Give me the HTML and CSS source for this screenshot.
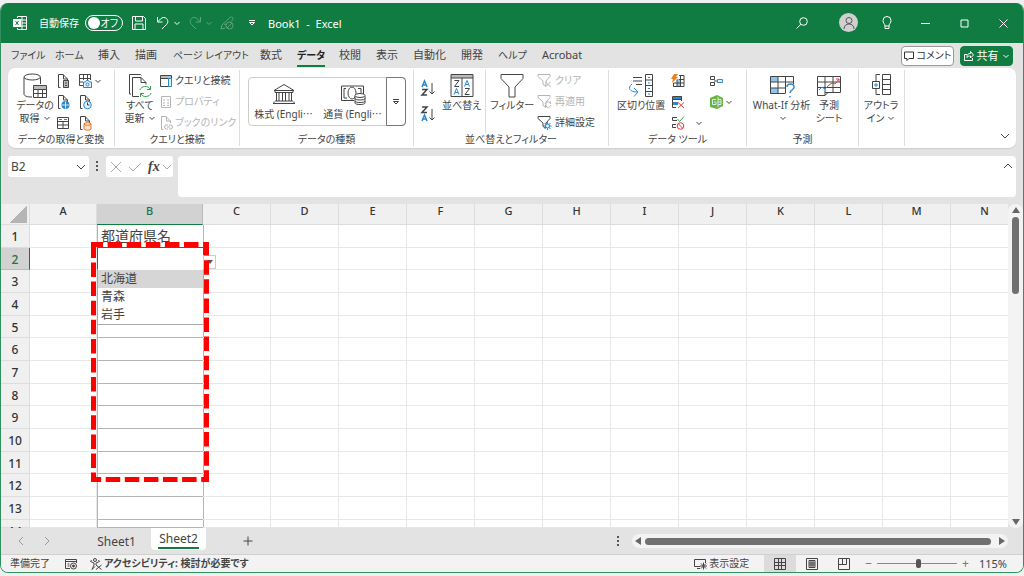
FILE: index.html
```html
<!DOCTYPE html>
<html lang="ja">

<head>
    <meta charset="UTF-8">
    <title>Book1 - Excel</title>
    <link rel="stylesheet" href="styles.css">
</head>

<body>
<svg class="defs" aria-hidden="true">
    <symbol id="down" viewBox="0 0 8 8"><path d="M1.500 3 4 5.500 6.500 3"/></symbol>
    <symbol id="page" viewBox="0 0 14 16"><path d="M4.500 14.500H2.500V1.500H7L11.500 6M7.500 1.500V6h4v2"/></symbol>
    <symbol id="funnel" viewBox="0 0 16 16"><path d="M1 1.500h12v2L9 8v5l-3-1.500V8L1 3.500z"/></symbol>
</svg>
<div class="window">
    <header class="title-bar">
        <svg class="logo" width="14" height="14" viewBox="0 0 14 14"><path d="M4.500 2V.5h9v13h-9V12M9 .5v13M4.500 4h9M9 7h4.500M9 10h4.500M4.500 10H9"/><path class="solid" d="M0 3h8v8H0z"/><path class="cut" d="m2.500 5 3 4m0-4-3 4"/></svg>
        <label class="autosave">自動保存
            <input type="checkbox" role="switch">
            <span class="switch"><i></i>オフ</span>
        </label>
        <button class="save" aria-label="保存"><svg width="14" height="14" viewBox="0 0 14 14"><path d="M.5.5h11l2 2v11H.5zM3.500.5v4.500h7V.5M3 13.500V8h8v5.500"/></svg></button>
        <button class="undo" aria-label="元に戻す"><svg width="14" height="14" viewBox="0 0 14 14"><path d="M1.500 1v5h5M1.500 6l3-3c2-2 4.500-2 6-.5s2 4 0 6L6 13"/></svg><svg width="8" height="8"><use href="#down"/></svg></button>
        <button class="redo faded" aria-label="やり直し"><svg width="14" height="14" viewBox="0 0 14 14"><path d="M12.500 1v5h-5M12.500 6l-3-3C7.500 1 5 1 3.500 2.500s-2 4 0 6L8 13"/></svg><svg width="8" height="8"><use href="#down"/></svg></button>
        <button class="pen faded" aria-label="ペン"><svg width="14" height="14" viewBox="0 0 14 14"><path d="m5 12-4 1 1-4 8-7.500c2-1.500 4 .5 2.500 2.500L11 5.500"/><circle cx="9.500" cy="9.500" r="3.500"/><path d="m7 12 5-5M4 8l2 1"/></svg></button>
        <button class="more" aria-label="カスタマイズ"><svg width="8" height="8" viewBox="0 0 8 8"><path d="M1 1.500h6M1.500 3.500h5L4 6z"/></svg></button>
        <span class="book">Book1&nbsp; -&nbsp; Excel</span>
        <div class="window-tools">
            <button aria-label="検索"><svg width="12" height="12" viewBox="0 0 12 12"><circle cx="7.500" cy="4.500" r="3.800"/><path d="M4.800 7.500.5 11.500"/></svg></button>
            <button class="user" aria-label="アカウント"><svg width="14" height="14" viewBox="0 0 14 14"><circle cx="7" cy="4.500" r="3"/><path d="M2 13c0-3 2-5 5-5s5 2 5 5"/></svg></button>
            <button aria-label="ヒント"><svg width="10" height="14" viewBox="0 0 10 14"><path d="M3 10c0-2-2-3-2-5.500a4 4 0 0 1 8 0C9 7 7 8 7 10zM3 10v2.500h4V10"/></svg></button>
            <button aria-label="最小化"><svg width="9" height="9" viewBox="0 0 9 9"><path d="M0 4.500h9"/></svg></button>
            <button aria-label="最大化"><svg width="9" height="9" viewBox="0 0 9 9"><path d="M1 1h7v7H1z"/></svg></button>
            <button aria-label="閉じる"><svg width="9" height="9" viewBox="0 0 9 9"><path d="m.5.5 8 8m0-8-8 8"/></svg></button>
        </div>
    </header>

    <div class="tab-bar">
        <nav class="tabs">
            <a href="#" class="kana">ファイル</a>
            <a href="#" class="kana">ホーム</a>
            <a href="#">挿入</a>
            <a href="#">描画</a>
            <a href="#" class="kana">ページ レイアウト</a>
            <a href="#">数式</a>
            <a href="#" class="kana current">データ</a>
            <a href="#">校閲</a>
            <a href="#">表示</a>
            <a href="#">自動化</a>
            <a href="#">開発</a>
            <a href="#" class="kana">ヘルプ</a>
            <a href="#">Acrobat</a>
        </nav>
        <button class="comment"><svg width="10" height="10" viewBox="0 0 10 10"><path d="M.5 1h9v6.500H5l-2 2v-2H.5z"/></svg>コメント</button>
        <button class="share"><svg width="10" height="10" viewBox="0 0 10 10"><path d="M3 3.500H.5v6h8V7M3 6.500c0-3 1-4 3.500-4V.5L9.500 4l-3 3V5C5 5 4 5 3 6.500"/></svg>共有<svg width="8" height="8"><use href="#down"/></svg></button>
    </div>

    <div class="ribbon">
        <section class="group get-data">
            <div class="tools">
                <button class="big">
                    <svg width="26" height="26" viewBox="0 0 26 26"><path d="M10 24c-5 0-8-1-8-3V4.500M18.500 4.500V11"/><ellipse cx="10.200" cy="4" rx="8.200" ry="3"/><path d="M11.500 12.500h13v12h-13zM11.500 16.500h13m-13 4h13M16 12.500v12m4.500-12v12"/><path class="shade" d="M12 13h12v3H12z"/></svg>
                    <span>データの<br>取得<svg width="8" height="8"><use href="#down"/></svg></span>
                </button>
                <div class="small">
                    <button aria-label="テキストから"><svg width="14" height="16"><use href="#page"/><path class="shade" d="M7 7.500h6v7H7z"/><path d="M7.500 7.500h5v7h-5zM9 10h2m-2 2.500h2"/></svg></button>
                    <button aria-label="Webから"><svg width="14" height="16"><use href="#page"/><circle class="blue-fill" cx="9.500" cy="11" r="4"/><path class="pale" d="M6 11h7M9.500 7.500v7"/></svg></button>
                    <button aria-label="テーブルから"><svg width="14" height="14" viewBox="0 0 14 14"><path d="M1.500 1.500h11v11h-11zM1.500 5.500h11M1.500 9h11M7 5.500v7"/><path class="blue" d="M3 3.500h3m2 0h3"/></svg></button>
                </div>
                <div class="small">
                    <button aria-label="画像から"><svg width="14" height="16" viewBox="0 0 14 16"><path d="M5 12.500H1.500v-11h11V7M1.500 5.500h11M1.500 9H5M5.500 2v5m4-5v5"/><path class="blue light" d="M5.500 9h2l1-1.500h2L11.500 9h2v5.500h-8z"/><circle class="blue" cx="9.500" cy="11.500" r="1.500"/></svg><svg width="8" height="8"><use href="#down"/></svg></button>
                    <button aria-label="最近のソース"><svg width="14" height="16"><use href="#page"/><circle class="blue light" cx="9.500" cy="11" r="3.800"/><path d="M9.500 8.500V11h2"/></svg></button>
                    <button aria-label="既存の接続"><svg width="14" height="16"><use href="#page"/><path class="orange" d="M6 9v5c0 1.500 7 1.500 7 0V9"/><ellipse class="orange" cx="9.500" cy="9" rx="3.500" ry="1.300"/></svg></button>
                </div>
            </div>
            <h2>データの取得と変換</h2>
        </section>

        <section class="group queries">
            <div class="tools">
                <button class="big">
                    <svg width="26" height="26" viewBox="0 0 26 26"><path d="M4 21H2.500V1.500h11l1 1"/><path d="M12 23.500H5.500v-19H14l5 5v2M14 4.500v5h5"/><path class="green" d="M13 17c1-4 8-5 10-1m.5-3v3.500H20M24 20c-1 4-8 5-10 1m-.5 3v-3.500H17"/></svg>
                    <span>すべて<br>更新<svg width="8" height="8"><use href="#down"/></svg></span>
                </button>
                <div class="small">
                    <button><svg width="14" height="14" viewBox="0 0 14 14"><path class="shade" d="M1 2h12v2H1z"/><path d="M1.500 1.500h11v11h-11zM1.500 4.500h11"/><path class="blue light" d="M9.500 4.500h3v8h-3z"/></svg>クエリと接続</button>
                    <button disabled><svg width="14" height="14" viewBox="0 0 14 14"><path d="M2.500 1.500h9v11h-9zM4 5h2m2 0h2M4 8h2m2 0h2M4 10.500h2m2 0h2"/></svg>プロパティ</button>
                    <button disabled><svg width="14" height="16"><use href="#page"/><path d="M9 10H7.500a2 2 0 0 0 0 4H9m1-4h1.500a2 2 0 0 1 0 4H10m-2-2h3"/></svg>ブックのリンク</button>
                </div>
            </div>
            <h2>クエリと接続</h2>
        </section>

        <section class="group data-types">
            <div class="tools">
                <div class="gallery">
                    <button><svg width="24" height="22" viewBox="0 0 24 22"><path d="M2 7.500 12 1.500l10 6zM3 7.500v2h18v-2M4.500 9.500V18M7 9.500V18m3.500-8.500V18m3-8.500V18M17 9.500V18m2.500-8.500V18M3 18h18M1 20.500h22M2 18.500v2m20-2v2"/></svg><span>株式 (Engli<b>…</b></span></button>
                    <button><svg width="26" height="22" viewBox="0 0 26 22"><path d="M14 17.500H1.500V3h22v8M4 5.500h2M4 5.500V15h3M21 10V5.500h-3"/><ellipse cx="12" cy="10" rx="4" ry="6"/><path class="paper" d="M15 13v7c0 2 10 2 10 0v-7"/><ellipse class="paper" cx="20" cy="12.500" rx="5" ry="2"/><path d="M15 15.500c0 2 10 2 10 0M15 18c0 2 10 2 10 0"/></svg><span>通貨 (Engli<b>…</b></span></button>
                    <button class="expand" aria-label="データの種類"><svg width="8" height="8" viewBox="0 0 8 8"><path d="M1 1.500h6M1.500 3.500h5L4 6z"/></svg></button>
                </div>
            </div>
            <h2>データの種類</h2>
        </section>

        <section class="group sort-filter">
            <div class="tools">
                <div class="small sorts">
                    <button aria-label="昇順"><svg width="16" height="18" viewBox="0 0 16 18"><path class="blue" d="m2 8 2.500-6L7 8M3 6h3"/><path class="strong" d="M2 10.500h5L2 16h5"/><path d="M12 4v11m-2.500-2.500L12 15l2.500-2.500"/></svg></button>
                    <button aria-label="降順"><svg width="16" height="18" viewBox="0 0 16 18"><path class="strong" d="M2 2h5L2 7.500h5"/><path class="blue" d="m2 16 2.500-6L7 16m-4-2h3"/><path d="M12 4v11m-2.500-2.500L12 15l2.500-2.500"/></svg></button>
                </div>
                <button class="big">
                    <svg width="26" height="26" viewBox="0 0 26 26"><path class="shade" d="M2 2h22v3H2z"/><path d="M2 1.500h22v22H2zM2 5h22M13 5v18.500M5.500 7.500H10l-4.500 6H10M16 15.500h4.500l-4.500 6h4.500"/><path class="blue" d="m5 21.500 2.500-6 2.500 6m-4-2h3M15.500 13.500l2.500-6 2.500 6m-4-2h3"/></svg>
                    <span>並べ替え</span>
                </button>
                <button class="big filter">
                    <svg width="26" height="26" viewBox="0 0 26 26"><path d="M2 1.500h22v4L16 14v10h-6V14L2 5.500z"/></svg>
                    <span>フィルター</span>
                </button>
                <div class="small">
                    <button disabled><svg width="16" height="16"><use href="#funnel"/><path d="m8.500 9 5 5m0-5-5 5"/></svg>クリア</button>
                    <button disabled><svg width="16" height="16"><use href="#funnel"/><path d="M8 10c1-3 5-3 5.500 0V7.500M14 11c-1 3-5 3-5.500 0v3"/></svg>再適用</button>
                    <button><svg width="16" height="16"><use href="#funnel"/><path class="blue" d="M10.500 7v8m-4-4h8m-7-3 6 6m0-6-6 6"/><circle class="blue light" cx="10.500" cy="11" r="2"/></svg>詳細設定</button>
                </div>
            </div>
            <h2>並べ替えとフィルター</h2>
        </section>

        <section class="group data-tools">
            <div class="tools">
                <button class="big">
                    <svg width="26" height="26" viewBox="0 0 26 26"><path d="M5 4.500h9M5 8h9M8 11.500h6M17.500 1.500h7v22h-7zM17.500 7h7m-7 5.500h7m-7 6h7"/><path class="blue" d="M4 11c-5 4-2 8 5 8m-3-4 4 4-4 4.500M20 4.500h2m-2 5.500h2m-2 5.500h2m-2 5.500h2"/></svg>
                    <span>区切り位置</span>
                </button>
                <div class="small">
                    <button aria-label="フラッシュ フィル"><svg width="14" height="14" viewBox="0 0 14 14"><path class="sky" d="M6 5h4v8H6z"/><path d="M8 1.500h5v11H2.500V9M2.500 9H13M8 5.500h5M9.500 2v11M6 5.500v7"/><path class="bolt" d="M3 0h4L5 3h2L1 9l1-4H0z"/></svg></button>
                    <button aria-label="重複の削除"><svg width="14" height="14" viewBox="0 0 14 14"><path class="blue-fill" d="M2 1h9v3H2zM2 7h5v3H2z"/><path d="M1.500 1.500h9V6M1.500 1.500v11H5M2 4.500h9"/><path class="red" d="m7 7.500 6 5.500m0-5.500L7 13"/></svg></button>
                    <button aria-label="データの入力規則"><svg width="14" height="14" viewBox="0 0 14 14"><path d="M6 1.500H1.500v3H6M5 8.500H1.500v3H5"/><path class="green" d="m6.500 3 2 2.500L13 .5"/><circle class="red" cx="9.500" cy="10" r="3.300"/><path class="red" d="m7.500 8 4 4"/></svg></button>
                </div>
                <div class="small arrows">
                    <button aria-label="入力規則のメニュー"><svg width="8" height="8"><use href="#down"/></svg></button>
                </div>
                <div class="small">
                    <button aria-label="統合"><svg width="14" height="14" viewBox="0 0 14 14"><path d="M1.500 2.500h4v3h-4zM1.500 8.500h4v3h-4zM5 7h3"/><path class="blue light" d="M8.500 5.500h5v3h-5z"/></svg></button>
                    <button aria-label="データ モデル"><svg width="14" height="14" viewBox="0 0 14 14"><path class="lime" d="m1 3 7-3 6 3v8l-6 3-7-2z"/><path class="pale" d="M7 4.500H3.500v5H7V7H5M9 2v10m0-7.500h3v5H9M9 7h3"/></svg><svg width="8" height="8"><use href="#down"/></svg></button>
                </div>
            </div>
            <h2>データ ツール</h2>
        </section>

        <section class="group forecast">
            <div class="tools">
                <button class="big">
                    <svg width="26" height="26" viewBox="0 0 26 26"><path class="sky" d="M1 3h8v6H1zM1 15h8v6H1z"/><path d="M24.500 11V3.500h-23v17H16M1.500 9h23M1.500 15H17M9 3.500v17m7.500-17v17"/><path class="blue ask" d="M18 14c0-4 7-4 7 0 0 3-4 3-4 6m0 3v1.500"/></svg>
                    <span>What-If 分析<br><svg width="8" height="8"><use href="#down"/></svg></span>
                </button>
                <button class="big">
                    <svg width="26" height="26" viewBox="0 0 26 26"><path d="M1.500 3.500h23v16H12l-3 3H1.500zM1.500 9h23M1.500 14.500h23M9 3.500v19m8-19v16M9 19.500h3"/><path class="blue" d="m3 17 3-3 3 2 4-4"/><path class="red" d="m13 12 3-2 3 1 4-5m-3 0h3v3"/></svg>
                    <span>予測<br>シート</span>
                </button>
            </div>
            <h2>予測</h2>
        </section>

        <section class="group outline">
            <div class="tools">
                <button class="big">
                    <svg width="26" height="26" viewBox="0 0 26 26"><path d="M14.500 1.500h8v20h-8zM14.500 6.500h8m-8 5h8m-8 5h8M4.500 8.500h7v7h-7zM12 1.500H8v7M8 15.500v6h4"/><path class="blue" d="M6 12h4m-2-2v4"/></svg>
                    <span>アウトラ<br>イン<svg width="8" height="8"><use href="#down"/></svg></span>
                </button>
            </div>
        </section>
        <button class="collapse" aria-label="リボンを折りたたむ"><svg width="10" height="8" viewBox="0 0 10 8"><path d="m1 2 4 4 4-4"/></svg></button>
    </div>

    <div class="formula-bar">
        <div class="name-box">
            <input type="text" value="B2" aria-label="名前ボックス">
            <button aria-label="名前の一覧"><svg width="10" height="8" viewBox="0 0 10 8"><path d="m1 2 4 4 4-4"/></svg></button>
        </div>
        <svg class="dots" width="4" height="12" viewBox="0 0 4 12"><path d="M1 1h2v2H1zM1 5h2v2H1zM1 9h2v2H1z"/></svg>
        <div class="formula-buttons">
            <button class="dim" aria-label="キャンセル"><svg width="12" height="12" viewBox="0 0 12 12"><path d="m1 1 10 10m0-10L1 11"/></svg></button>
            <button class="dim" aria-label="入力"><svg width="14" height="12" viewBox="0 0 14 12"><path d="m1 6 4 4 8-8"/></svg></button>
            <button class="fx">fx</button>
            <button class="dim" aria-label="関数の一覧"><svg width="10" height="8" viewBox="0 0 10 8"><path d="m1 2 4 4 4-4"/></svg></button>
        </div>
        <div class="formula">
            <textarea aria-label="数式バー"></textarea>
            <button aria-label="数式バーの折りたたみ"><svg width="10" height="8" viewBox="0 0 10 8"><path d="m1 6 4-4 4 4"/></svg></button>
        </div>
    </div>

    <main class="sheet-area">
        <table class="sheet">
            <thead>
                <tr><th class="corner"></th><th>A</th><th class="active">B</th><th>C</th><th>D</th><th>E</th><th>F</th><th>G</th><th>H</th><th>I</th><th>J</th><th>K</th><th>L</th><th>M</th><th>N</th></tr>
            </thead>
            <tbody>
                <tr>
                    <th>1</th><td></td>
                    <td class="list">都道府県名</td>
                </tr>
                <tr>
                    <th class="active">2</th><td></td>
                    <td class="list selected">
                        <button class="open-list" aria-label="リストを開く"><svg width="6" height="4" viewBox="0 0 6 4"><path d="M0 0h6L3 4z"/></svg></button>
                        <ul class="choices" role="listbox" aria-label="都道府県名">
                            <li role="option" aria-selected="true">北海道</li>
                            <li role="option">青森</li>
                            <li role="option">岩手</li>
                        </ul>
                        <svg class="marker" width="118" height="240" viewBox="0 0 118 240"><path d="M2.500 2.500h113v235H2.500z"/></svg>
                    </td>
                </tr>
            </tbody>
        </table>
        <div class="v-scroll">
            <svg width="8" height="6" viewBox="0 0 8 6"><path d="M0 6 4 0l4 6z"/></svg>
            <div class="track"><i></i></div>
            <svg width="8" height="6" viewBox="0 0 8 6"><path d="m0 0 4 6 4-6z"/></svg>
        </div>
    </main>

    <div class="sheet-tabs">
        <button class="step" aria-label="前のシート"><svg width="6" height="10" viewBox="0 0 6 10"><path d="M5 1 1 5l4 4"/></svg></button>
        <button class="step" aria-label="次のシート"><svg width="6" height="10" viewBox="0 0 6 10"><path d="m1 1 4 4-4 4"/></svg></button>
        <button class="sheet-tab">Sheet1</button>
        <button class="sheet-tab open"><span>Sheet2</span></button>
        <button class="add" aria-label="新しいシート"><svg width="10" height="10" viewBox="0 0 10 10"><path d="M5 .5v9M.5 5h9"/></svg></button>
        <svg class="dots" width="4" height="12" viewBox="0 0 4 12"><path d="M1 1h2v2H1zM1 5h2v2H1zM1 9h2v2H1z"/></svg>
        <div class="h-scroll">
            <svg width="6" height="8" viewBox="0 0 6 8"><path d="M6 0 0 4l6 4z"/></svg>
            <i></i>
            <svg width="6" height="8" viewBox="0 0 6 8"><path d="m0 0 6 4-6 4z"/></svg>
        </div>
    </div>

    <footer class="status-bar">
        <span class="ready">準備完了</span>
        <svg class="macro" width="12" height="12" viewBox="0 0 12 12"><path d="M5 10.500H.5v-9h11V5M.5 3.500h11M2.500 6h2m-2 2h2"/><circle cx="8.500" cy="8" r="3"/><circle class="dot" cx="8.500" cy="8" r="1"/></svg>
        <svg class="person" width="12" height="12" viewBox="0 0 12 12"><circle cx="5" cy="2" r="1.500"/><path d="M.5 3.500 4 5v2L2 11.500M9.500 3.500 6 5v2M.5 3.500l1-1.500M9.500 3.500l-1-1.500M2 11.500l3-3M6 7l5.500 4.500m0-4.500L6 11.500"/></svg>
        <strong>アクセシビリティ: 検討が必要です</strong>
        <button class="display"><svg width="13" height="12" viewBox="0 0 13 12"><path d="M6 8.500H.5v-7h11V5M3 10.500h3"/><path d="M9.500 4.500v7M6 8h7M7 5.500l5 5m0-5-5 5"/></svg>表示設定</button>
        <button class="view on" aria-label="標準"><svg width="12" height="12" viewBox="0 0 12 12"><path d="M.5.5h11v11H.5zM.5 4.500h11M.5 7.500h11M4.500.5v11M7.500.5v11"/></svg></button>
        <button class="view" aria-label="ページ レイアウト"><svg width="12" height="12" viewBox="0 0 12 12"><path d="M.5.5h11v11H.5zM3 2.500h6v7H3zM3 5h6M3 7h6M5 2.500v7m2-7v7"/></svg></button>
        <button class="view" aria-label="改ページ プレビュー"><svg width="12" height="12" viewBox="0 0 12 12"><path d="M.5.5h11v11H.5zM4.500.5V6M8.500 .5v6H.5"/></svg></button>
        <div class="zoom">
            <button aria-label="縮小">−</button>
            <input type="range" min="10" max="210" value="115" aria-label="ズーム">
            <button aria-label="拡大">+</button>
        </div>
        <span class="percent">115%</span>
    </footer>
</div>

<script>
    (function(){
        var columns = 15;
        var table = document.querySelector(".sheet");
        var body = table.tBodies[0];

        for(var n = 3; n <= 14; n++){
            var row = body.insertRow();
            var head = document.createElement("th");
            head.textContent = n;
            row.appendChild(head);
        }

        // 空のセルで行を埋める
        Array.prototype.forEach.call(body.rows,function(row){
            while(row.cells.length < columns){
                var cell = row.insertCell();
                if(cell.cellIndex === 2){
                    cell.className = "list";
                }
            }
        })
    })()
</script>
</body>
</html>
```
FILE: styles.css
```css
* {
    box-sizing: border-box;
}

body {
    margin: 0;
    height: 100vh;
    padding: 3px 0;
    background: #f0f0f0;
    color: #444;
    font: 10px/13px "Noto Sans", "Noto Sans CJK JP", sans-serif;
    font-feature-settings: "palt";
}

button, input, textarea {
    margin: 0;
    padding: 0;
    border: 0;
    background: none;
    color: inherit;
    font: inherit;
    font-feature-settings: inherit;
    outline: none;
}

button {
    display: flex;
    align-items: center;
    justify-content: center;
    white-space: nowrap;
}

svg {
    flex: none;
    fill: none;
    stroke: currentColor;
}

.defs {
    position: absolute;
    width: 0;
    height: 0;
}

.window {
    display: flex;
    flex-direction: column;
    height: 100%;
    border: 1px solid #2f9160;
    border-top: 0;
    border-radius: 8px;
    background: #e3e3e3;
    overflow: hidden;
}

/* タイトル バー */
.title-bar {
    display: flex;
    align-items: center;
    flex: none;
    height: 40px;
    padding-left: 12px;
    background: #107c41;
    color: #fff;
}

.logo {
    margin-right: 12px;
}

.logo .solid {
    fill: #fff;
    stroke: none;
}

.logo .cut {
    stroke: #107c41;
}

.autosave {
    display: flex;
    align-items: center;
    gap: 6px;
    margin-right: 9px;
}

.autosave input {
    position: absolute;
    opacity: 0;
}

.switch {
    display: flex;
    align-items: center;
    justify-content: space-between;
    width: 38px;
    height: 16px;
    padding: 0 4px 0 2px;
    border: 1px solid #fff;
    border-radius: 8px;
}

.switch i {
    width: 12px;
    height: 12px;
    border-radius: 50%;
    background: #fff;
}

.save {
    margin-right: 10px;
}

.undo, .redo {
    gap: 3px;
    margin-right: 7px;
}

.pen {
    margin-right: 14px;
}

.faded {
    color: #5ba57d;
}

.more {
    margin-right: 12px;
}

.book {
    font-size: 11px;
}

.window-tools {
    display: flex;
    margin-left: auto;
}

.window-tools button {
    width: 39px;
    height: 40px;
}

.window-tools .user {
    width: 19px;
    height: 19px;
    margin: 10px 9px 0 18px;
    border-radius: 50%;
    background: #d0d0d0;
    color: #555;
}

/* リボンのタブ */
.tab-bar {
    display: flex;
    align-items: center;
    flex: none;
    height: 25px;
    padding: 0 10px;
}

.tabs {
    display: grid;
    grid-template-columns: 44px 43px 37px 38px 87px 37px 42px 37px 37px 48px 37px 44px 44px;
    margin-right: auto;
}

.tabs a {
    justify-self: start;
    padding: 4px 0 3px;
    border-bottom: 2px solid transparent;
    color: #444;
    font-size: 11px;
    line-height: 14px;
    text-decoration: none;
    white-space: nowrap;
}

.tabs .kana {
    font-size: 10px;
}

.tabs .current {
    border-color: #107c41;
    color: #222;
    font-weight: bold;
}

.comment, .share {
    gap: 3px;
    height: 20px;
    border: 1px solid #999;
    border-radius: 4px;
    background: #fff;
    color: #333;
}

.comment {
    width: 53px;
    margin-right: 6px;
}

.share {
    width: 53px;
    border-color: #107c41;
    background: #107c41;
    color: #fff;
    font-size: 11px;
}

/* リボン */
.ribbon {
    display: flex;
    flex: none;
    height: 80px;
    margin: 0 7px;
    border-radius: 7px;
    background: #fff;
    box-shadow: 0 1px 1px #ccc;
}

.group {
    display: flex;
    flex-direction: column;
    justify-content: space-between;
    flex: none;
    margin: 2px 0;
    border-right: 1px solid #ddd;
}

.group h2 {
    margin: 0;
    font-size: 10px;
    font-weight: normal;
    text-align: center;
}

.tools {
    display: flex;
    gap: 4px;
    padding: 0 8px;
}

.big {
    flex-direction: column;
    justify-content: flex-start;
    min-width: 38px;
    padding-top: 3px;
}

.big span svg {
    margin-left: 3px;
}

.small {
    display: grid;
    grid-auto-rows: 21px;
}

.small button {
    justify-content: flex-start;
    gap: 2px;
}

.small button:disabled {
    color: #b5b5b5;
}

.get-data {
    width: 107px;
}

.get-data .tools {
    gap: 2px;
}

.get-data .small {
    width: 20px;
}

.queries {
    width: 125px;
}

.queries .tools {
    gap: 0;
    padding: 0 6px;
}

.data-types {
    width: 174px;
}

.sort-filter {
    width: 195px;
}

.sort-filter .tools {
    padding: 0 6px;
}

.sort-filter .sorts {
    grid-auto-rows: 26px;
    padding-top: 5px;
    margin-right: 2px;
}

.sort-filter .filter {
    padding-left: 4px;
    border-left: 1px solid #ddd;
}

.sort-filter .filter + .small {
    margin-left: -1px;
}

.data-tools {
    width: 138px;
}

.data-tools .tools {
    gap: 6px;
}

.data-tools .arrows {
    align-content: end;
    padding-left: 4px;
}

.forecast {
    width: 112px;
}

.forecast .tools {
    padding: 0 10px;
}

.outline {
    width: 46px;
}

.outline .tools {
    padding: 0 3px;
}

.collapse {
    align-self: flex-end;
    margin-left: auto;
    padding: 8px 6px;
}

.gallery {
    display: flex;
    height: 49px;
    margin-top: 7px;
    border: 1px solid #ccc;
    border-radius: 4px;
}

.gallery button {
    flex-direction: column;
    gap: 2px;
    width: 69px;
}

.gallery b {
    font-family: "Noto Sans CJK JP", sans-serif;
    font-weight: normal;
}

.gallery .expand {
    width: 20px;
    margin: -1px;
    border: 1px solid #777;
    border-radius: 0 4px 4px 0;
}

.blue {
    stroke: #2b88d0;
}

.light {
    fill: #e3f2fc;
}

.blue-fill {
    fill: #2b88d0;
    stroke: none;
}

.sky {
    fill: #8cc5f0;
    stroke: none;
}

.green {
    stroke: #2ba84a;
}

.red {
    stroke: #e5393f;
}

.orange {
    fill: #fde3cd;
    stroke: #e8711c;
}

.bolt {
    fill: #f08020;
    stroke: none;
}

.lime {
    fill: #6cb33f;
    stroke: none;
}

.shade {
    fill: #bbb;
    stroke: none;
}

.pale {
    stroke: #d5ecf8;
}

.paper {
    fill: #fff;
}

.strong, .sorts .blue, .ask {
    stroke-width: 1.5;
}

/* 数式バー */
.formula-bar {
    display: flex;
    align-items: flex-start;
    flex: none;
    height: 56px;
    padding: 8px 7px;
}

.name-box {
    display: flex;
    width: 81px;
    height: 21px;
    padding: 0 3px;
    border-radius: 3px;
    background: #fff;
    font-size: 12px;
}

.name-box input {
    flex: 1;
    min-width: 0;
}

.dots {
    margin: 4px 7px 0 6px;
    fill: #555;
    stroke: none;
}

.formula-buttons {
    display: flex;
    gap: 6px;
    height: 21px;
    padding: 0 1px 0 4px;
    border-radius: 3px;
    background: #fff;
}

.formula-buttons .fx {
    font: italic bold 14px "Liberation Serif", serif;
}

.formula-buttons .fx + button {
    margin-left: -4px;
}

.dim {
    color: #aaa;
}

.formula {
    display: flex;
    align-items: flex-start;
    flex: 1;
    height: 41px;
    margin-left: 5px;
    padding: 6px 3px;
    border-radius: 4px;
    background: #fff;
}

.formula textarea {
    flex: 1;
    height: 28px;
    resize: none;
}

/* ワークシート */
.sheet-area {
    display: flex;
    flex: 1;
    min-height: 0;
}

.sheet {
    display: grid;
    grid-template-columns: 29px 67px 106px repeat(12, 68px);
    grid-template-rows: 21px repeat(13, 8fr) 3fr;
    flex: 1;
    min-width: 0;
    background: #fff;
    overflow: hidden;
}

.sheet thead, .sheet tbody, .sheet tr {
    display: contents;
}

.sheet th, .sheet td {
    min-height: 0;
    padding: 0;
    border-right: 1px solid #e8e8e8;
    border-bottom: 1px solid #e8e8e8;
}

.sheet th {
    border-color: #ddd;
    background: #f0f0f0;
    color: #333;
    font-size: 12px;
    font-weight: 500;
    line-height: 24px;
    text-align: center;
}

.sheet thead th {
    font-size: 11px;
    line-height: 14px;
}

.sheet .active {
    border-color: #107c41;
    background: #d2d2d2;
    color: #217346;
}

.sheet thead .active {
    border-right-color: #bbb;
}

.sheet tbody .active {
    border-bottom-color: #bbb;
}

.sheet .corner {
    background: linear-gradient(135deg, transparent 50%, #b5b5b5 50%) no-repeat 8px 2px / 18px 17px #f0f0f0;
}

.sheet .list {
    margin-right: -1px;
    padding-left: 3px;
    border: 1px solid #b5b5b5;
    border-top: 0;
    font-size: 14px;
    line-height: 22px;
}

.sheet .selected {
    position: relative;
    margin-top: -1px;
    border: 1px solid #217346;
}

.choices {
    position: absolute;
    top: 100%;
    left: -1px;
    right: -1px;
    margin: 0;
    padding: 1px 0 0;
    border: 1px solid #aaa;
    border-top: 0;
    background: #fff;
    font-size: 12px;
    line-height: 18px;
    list-style: none;
    z-index: 1;
}

.choices li {
    padding-left: 3px;
}

.choices [aria-selected] {
    background: #d6d6d6;
}

.open-list {
    position: absolute;
    left: 100%;
    bottom: 0;
    width: 13px;
    height: 14px;
    border: 1px solid #ccc;
    background: #fff;
}

.open-list svg {
    fill: #555;
    stroke: none;
}

.marker {
    position: absolute;
    top: -6px;
    left: -7px;
    z-index: 2;
    stroke: #f00;
    stroke-width: 5;
    stroke-dasharray: 14.5 4.6;
    stroke-dashoffset: 5;
}

.v-scroll {
    display: flex;
    flex-direction: column;
    align-items: center;
    width: 15px;
    padding: 3px 0;
    border-radius: 7px;
    background: #f3f3f3;
}

.v-scroll svg, .h-scroll svg {
    fill: #666;
    stroke: none;
}

.track {
    flex: 1;
    padding: 4px 0;
}

.track i {
    display: block;
    width: 7px;
    height: 26%;
    border-radius: 4px;
    background: #707070;
}

/* シート見出し */
.sheet-tabs {
    display: flex;
    align-items: center;
    flex: none;
    height: 26px;
    padding-left: 7px;
    background: #e3e3e3;
    z-index: 3;
}

.step {
    width: 26px;
    color: #999;
}

.sheet-tab {
    width: 55px;
    height: 22px;
    margin-left: 29px;
    font-size: 12px;
}

.sheet-tab.open {
    align-self: flex-start;
    margin-left: 7px;
    border-radius: 0 0 4px 4px;
    background: #fff;
}

.sheet-tab span {
    padding: 2px 1px 1px;
    border-bottom: 2px solid #107c41;
    line-height: 15px;
}

.add {
    margin: 0 auto 0 37px;
}

.sheet-tabs .dots {
    margin: 0 12px;
}

.h-scroll {
    display: flex;
    align-items: center;
    gap: 4px;
    width: 37%;
    height: 14px;
    margin-right: 15px;
    padding: 0 3px;
    border-radius: 7px;
    background: #f3f3f3;
}

.h-scroll i {
    flex: 1;
    height: 7px;
    margin-right: 4px;
    border-radius: 4px;
    background: #707070;
}

/* ステータス バー */
.status-bar {
    display: flex;
    align-items: center;
    flex: none;
    height: 18px;
    padding: 0 16px 0 9px;
    border-top: 1px solid #d0d0d0;
    background: #f3f3f3;
}

.macro {
    margin: 0 13px 0 15px;
}

.macro .dot {
    fill: #333;
}

.person {
    margin-right: 2px;
}

.display {
    gap: 2px;
    margin: 0 15px 0 auto;
}

.view {
    width: 32px;
    height: 17px;
}

.view.on {
    background: #dcdcdc;
}

.zoom {
    display: flex;
    align-items: center;
    gap: 5px;
    margin: 0 10px 0 5px;
    color: #777;
    font-size: 12px;
}

.zoom input {
    width: 80px;
    height: 12px;
    background: linear-gradient(#888, #888) no-repeat center / 100% 1px;
    appearance: none;
}

.zoom input::-webkit-slider-thumb {
    width: 5px;
    height: 9px;
    border-radius: 2px;
    background: #555;
    appearance: none;
}

.percent {
    font-size: 11px;
}
```
